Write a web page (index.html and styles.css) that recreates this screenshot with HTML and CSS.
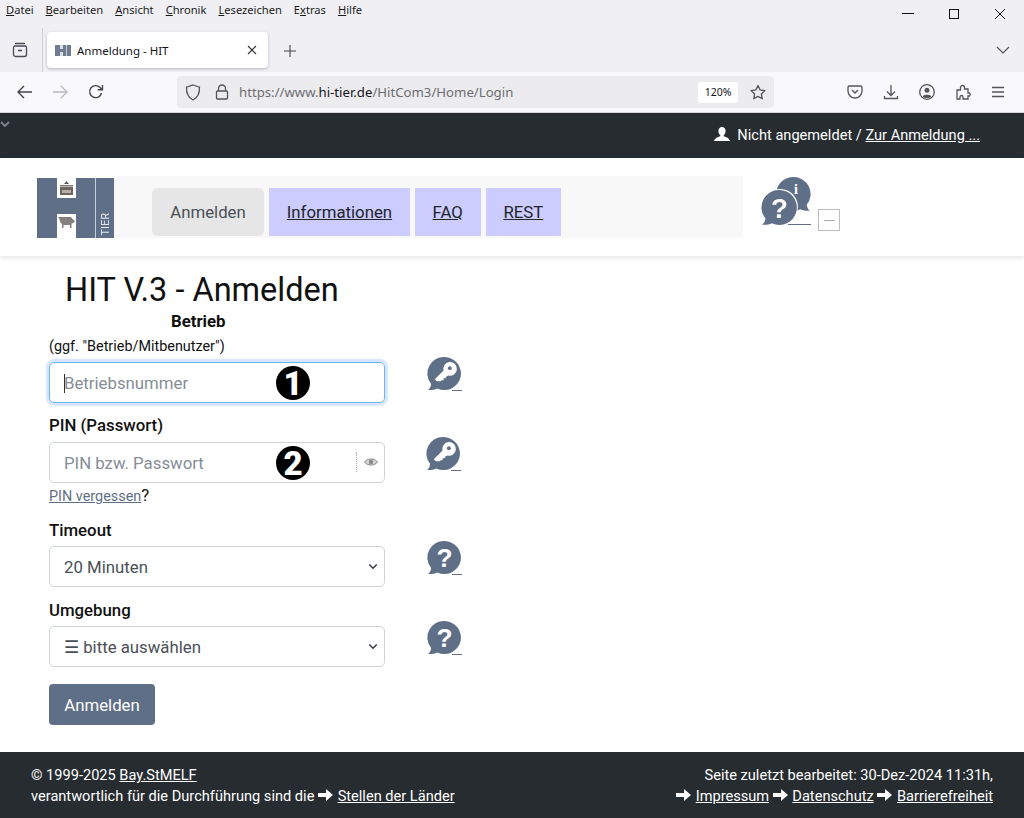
FILE: index.html
```html
<!DOCTYPE html>
<html lang="de">
<head>
<meta charset="utf-8">
<title>Anmeldung - HIT</title>
<link rel="stylesheet" href="styles.css">
</head>
<body>
<svg class="defs" width="0" height="0" aria-hidden="true">
  <defs>
    <symbol id="arrow" viewBox="0 0 16 14"><path d="M0 5h8V1l7 6-7 6V9H0z" fill="#fff"/></symbol>
    <symbol id="bubble-q" viewBox="0 0 36 36">
      <path d="M18 1a17 17 0 1 1-7.500 32.300C8 34.600 4.500 35 1 34.800c2-1.300 3-3.400 3.300-6A17 17 0 0 1 18 1z" fill="#5f6f87"/>
      <text x="18" y="28" class="bubble-mark">?</text>
    </symbol>
    <symbol id="bubble-i" viewBox="0 0 36 36">
      <path d="M18 1a17 17 0 1 0 7.500 32.300C28 34.600 31.500 35 35 34.800c-2-1.300-3-3.400-3.300-6A17 17 0 0 0 18 1z" fill="#5f6f87"/>
      <text x="21" y="18" class="bubble-info">i</text>
    </symbol>
    <symbol id="bubble-key" viewBox="0 0 36 36">
      <path d="M18 1a17 17 0 1 1-7.500 32.300C8 34.600 4.500 35 1 34.800c2-1.300 3-3.400 3.300-6A17 17 0 0 1 18 1z" fill="#5f6f87"/>
      <path d="M10 26l-2-2 9-9a7 7 0 1 1 5 5l-2 1-1 2h-2v2h-2l-1 1z" fill="#fff"/>
      <circle cx="23.500" cy="12.500" r="2" fill="#5f6f87"/>
    </symbol>
  </defs>
</svg>

<header class="browser">
  <div class="titlebar">
    <nav class="menu">
      <span><u>D</u>atei</span><span><u>B</u>earbeiten</span><span><u>A</u>nsicht</span><span><u>C</u>hronik</span><span><u>L</u>esezeichen</span><span>E<u>x</u>tras</span><span><u>H</u>ilfe</span>
    </nav>
    <div class="winbtns">
      <svg width="12" height="12" viewBox="0 0 12 12"><path d="M0 5.500h12" stroke="#111" fill="none"/></svg>
      <svg width="12" height="12" viewBox="0 0 12 12"><rect x="1.500" y="1.500" width="9" height="9" stroke="#111" fill="none"/></svg>
      <svg width="12" height="12" viewBox="0 0 12 12"><path d="M1 1l10 10M11 1L1 11" stroke="#111" fill="none"/></svg>
    </div>
  </div>
  <div class="tabbar">
    <svg class="tabs-icon" width="16" height="16" viewBox="0 0 16 16"><path d="M3 1.500h10M1.500 5.500a1.500 1.500 0 0 1 1.500-1.500h10a1.500 1.500 0 0 1 1.500 1.500v7a2 2 0 0 1-2 2h-9a2 2 0 0 1-2-2zM6 8.500h4" stroke="#4a4a55" stroke-width="1.300" fill="none"/></svg>
    <div class="tabsep"></div>
    <div class="tab">
      <svg class="favicon" width="16" height="11" viewBox="0 0 16 11"><path d="M0 0h16v11H0z" fill="#6f7c90"/><path d="M5 0h3v4H5zM5 7h3v4H5z" fill="#d9dde3"/><path d="M11 0h1v11h-1z" fill="#c4ccd6"/></svg>
      <span class="tabtitle">Anmeldung - HIT</span>
      <svg class="tabclose" width="10" height="10" viewBox="0 0 10 10"><path d="M1 1l8 8M9 1L1 9" stroke="#333" stroke-width="1.100" fill="none"/></svg>
    </div>
    <svg class="newtab" width="12" height="12" viewBox="0 0 12 12"><path d="M6 0v12M0 6h12" stroke="#444" stroke-width="1.100" fill="none"/></svg>
    <svg class="tablist" width="14" height="8" viewBox="0 0 14 8"><path d="M1 1l6 6 6-6" stroke="#555" stroke-width="1.200" fill="none"/></svg>
  </div>
  <div class="navbar">
    <svg class="ni first" width="16" height="14" viewBox="0 0 16 14"><path d="M15 7H1.500M7 1L1 7l6 6" stroke="#444" stroke-width="1.400" fill="none"/></svg>
    <svg class="ni" width="16" height="14" viewBox="0 0 16 14"><path d="M1 7h13.500M9 1l6 6-6 6" stroke="#b9b9bf" stroke-width="1.400" fill="none"/></svg>
    <svg class="ni reload" width="16" height="16" viewBox="0 0 16 16"><path d="M13.500 9a6 6 0 1 1-1.500-5.500L14 5.500M14.500 1v4.800H9.700" stroke="#444" stroke-width="1.400" fill="none"/></svg>
    <div class="urlbar">
      <svg width="16" height="17" viewBox="0 0 16 17"><path d="M8 1l6.500 2.200c.2 5.800-1.600 10.300-6.500 12.800-4.900-2.500-6.700-7-6.500-12.800z" stroke="#555" stroke-width="1.300" fill="none"/></svg>
      <svg class="lock" width="14" height="16" viewBox="0 0 14 16"><path d="M3.500 7V4.500a3.500 3.500 0 0 1 7 0V7M2.500 7h9a1 1 0 0 1 1 1v6a1 1 0 0 1-1 1h-9a1 1 0 0 1-1-1V8a1 1 0 0 1 1-1z" stroke="#555" stroke-width="1.300" fill="none"/></svg>
      <span class="url">https://www.<b>hi-tier.de</b>/HitCom3/Home/Login</span>
      <span class="zoom">120%</span>
      <svg class="star" width="16" height="16" viewBox="0 0 18 17"><path d="M9 1.200l2.400 5 5.400.7-4 3.800 1 5.400L9 13.500l-4.800 2.600 1-5.400-4-3.800 5.400-.7z" stroke="#555" stroke-width="1.500" fill="none" stroke-linejoin="round"/></svg>
    </div>
    <div class="tools">
      <svg width="16" height="16" viewBox="0 0 16 16"><path d="M2.500 2h11A1.500 1.500 0 0 1 15 3.500V7a7 7 0 0 1-14 0V3.500A1.500 1.500 0 0 1 2.500 2zM5 6l3 3 3-3" stroke="#555" stroke-width="1.300" fill="none"/></svg>
      <svg width="16" height="16" viewBox="0 0 16 16"><path d="M8 1v10M4 7.500L8 11.500l4-4M1.500 12v2.500h13V12" stroke="#555" stroke-width="1.300" fill="none"/></svg>
      <svg width="16" height="16" viewBox="0 0 16 16"><circle cx="8" cy="8" r="7.300" stroke="#555" stroke-width="1.300" fill="none"/><circle cx="8" cy="6.300" r="2.500" fill="#555"/><path d="M3.500 12.500c1-2.500 8-2.500 9 0-2 2-7 2-9 0z" fill="#555"/></svg>
      <svg width="16" height="16" viewBox="0 0 16 16"><path d="M2 6h3.500V3.500a2 2 0 0 1 4 0V5H13v4h1.500v0a2 2 0 0 1 0 3H13v3H8v-2a1.500 1.500 0 0 0-3 0v2H2z" stroke="#555" stroke-width="1.300" fill="none"/></svg>
      <svg width="14" height="12" viewBox="0 0 14 12"><path d="M1 1.500h12M1 6h12M1 10.500h12" stroke="#555" stroke-width="1.300" fill="none"/></svg>
    </div>
  </div>
</header>

<main class="page">
  <div class="topbar">
    <svg class="collapse" width="10" height="6" viewBox="0 0 10 6"><path d="M1 1l4 4 4-4" stroke="#7c8790" stroke-width="1.800" fill="none"/></svg>
    <svg class="user" width="16" height="15" viewBox="0 0 16 15"><path d="M8 0c2.300 0 3.600 1.800 3.600 4 0 1.700-.8 3.300-1.900 4.200v1.100c1.800.7 5.300 1.300 6.300 4.700H0c1-3.400 4.500-4 6.300-4.700V8.200C5.200 7.300 4.400 5.700 4.400 4 4.400 1.800 5.700 0 8 0z" fill="#fff"/></svg>
    <span>Nicht angemeldet / <a href="#">Zur Anmeldung ...</a></span>
  </div>

  <div class="sitehead">
    <div class="logo">
      <div class="logo-h">
        <span class="logo-top"><svg width="19" height="20" viewBox="0 0 19 20"><path d="M9.500 3l2.500 3H7z" fill="#5e5650"/><path d="M3 7h13v1.500H3z" fill="#7d746c"/><path d="M3 9h13v8H3z" fill="#6e655f"/><path d="M5 12h9v3H5z" fill="#b6b0a8"/></svg></span>
        <span class="logo-bottom"><svg width="19" height="24" viewBox="0 0 19 24"><path d="M1 3h13l1.500 2 2.500 2-1.500 2-2 .5v4.500h-1.500v-3L8 11 6.500 11v3H5v-4L3 8 2.500 5z" fill="#85807c"/></svg></span>
      </div>
      <div class="logo-side"><span>TIER</span></div>
    </div>
    <nav class="tabs">
      <span class="tab-active">Anmelden</span>
      <a class="tab-link" href="#">Informationen</a>
      <a class="tab-link" href="#">FAQ</a>
      <a class="tab-link" href="#">REST</a>
    </nav>
    <div class="help">
      <svg class="help-i" width="36" height="36"><use href="#bubble-i"/></svg>
      <span class="help-line"></span>
      <svg class="help-q" width="37" height="37"><use href="#bubble-q"/></svg>
    </div>
    <div class="tinybox"><span></span></div>
  </div>

  <section class="content">
    <h1>HIT V.3 - Anmelden</h1>
    <form class="form">
      <div class="betrieb">Betrieb</div>
      <div class="hint">(ggf. "Betrieb/Mitbenutzer")</div>
      <div class="row r1">
        <div class="field focus"><span class="caret"></span><span class="ph">Betriebsnummer</span><span class="num">1</span></div>
        <span class="hb"><svg width="35" height="35"><use href="#bubble-key"/></svg></span>
      </div>
      <label class="lab l2">PIN (Passwort)</label>
      <div class="row r2">
        <div class="field"><span class="ph">PIN bzw. Passwort</span><span class="num">2</span>
          <span class="eye"><svg width="14" height="10" viewBox="0 0 14 10"><path d="M0.500 5C3 1 11 1 13.500 5 11 9 3 9 0.500 5z" fill="#d5d5d5" stroke="#888"/><circle cx="7" cy="5" r="2.200" fill="#888"/></svg></span>
        </div>
        <span class="hb"><svg width="35" height="35"><use href="#bubble-key"/></svg></span>
      </div>
      <div class="forgot"><a href="#">PIN vergessen</a>?</div>
      <label class="lab l3">Timeout</label>
      <div class="row r3">
        <div class="field select"><span class="val">20 Minuten</span><svg class="chev" width="10" height="7" viewBox="0 0 12 8"><path d="M1.500 1.500L6 6l4.500-4.500" stroke="#343a40" stroke-width="1.800" fill="none"/></svg></div>
        <span class="hb"><svg width="35" height="35"><use href="#bubble-q"/></svg></span>
      </div>
      <label class="lab l4">Umgebung</label>
      <div class="row r4">
        <div class="field select"><span class="val">☰ bitte auswählen</span><svg class="chev" width="10" height="7" viewBox="0 0 12 8"><path d="M1.500 1.500L6 6l4.500-4.500" stroke="#343a40" stroke-width="1.800" fill="none"/></svg></div>
        <span class="hb"><svg width="35" height="35"><use href="#bubble-q"/></svg></span>
      </div>
      <button class="submit" type="button">Anmelden</button>
    </form>
  </section>

  <footer class="foot">
    <div class="foot-l">
      <div>© 1999-2025 <a href="#">Bay.StMELF</a></div>
      <div>verantwortlich für die Durchführung sind die <svg class="arr" width="16" height="14"><use href="#arrow"/></svg> <a href="#">Stellen der Länder</a></div>
    </div>
    <div class="foot-r">
      <div>Seite zuletzt bearbeitet: 30-Dez-2024 11:31h,</div>
      <div><svg class="arr" width="16" height="14"><use href="#arrow"/></svg> <a href="#">Impressum</a> <svg class="arr" width="16" height="14"><use href="#arrow"/></svg> <a href="#">Datenschutz</a> <svg class="arr" width="16" height="14"><use href="#arrow"/></svg> <a href="#">Barrierefreiheit</a></div>
    </div>
  </footer>
</main>
</body>
</html>
```
FILE: styles.css
```css
* { box-sizing: border-box; }
html, body { margin: 0; padding: 0; }
body { width: 1024px; height: 818px; overflow: hidden; font-family: Roboto, sans-serif; font-size: 16.800px; color: #212529; background: #fff; display: flex; flex-direction: column; }
.defs { position: absolute; }
.bubble-mark { font: 900 27px "Liberation Sans", sans-serif; fill: #fff; text-anchor: middle; }
.bubble-info { font: 700 14px "Liberation Serif", serif; fill: #fff; text-anchor: middle; }

.browser { height: 113px; flex: none; font-family: "Noto Sans", sans-serif; background: #f0f0f4; border-bottom: 1px solid #d6d6da; display: flex; flex-direction: column; }
.titlebar { height: 28px; display: flex; justify-content: space-between; }
.menu { display: flex; gap: 12px; padding: 1px 0 0 6px; font-size: 11.150px; color: #1a1a1a; line-height: 18px; }
.winbtns { display: flex; gap: 34px; padding: 8px 18px 0 0; }
.tabbar { height: 44px; display: flex; align-items: center; position: relative; padding-left: 12px; }
.tabsep { width: 1px; height: 44px; background: #cfcfd4; margin-left: 14px; }
.tab { width: 221px; height: 36px; margin: 0 0 0 4px; background: #fff; border-radius: 4px; box-shadow: 0 1px 3px rgba(0,0,0,.25); display: flex; align-items: center; padding: 0 11px 0 8px; font-size: 11.500px; color: #15141a; }
.favicon { margin-right: 6px; }
.tabtitle { flex: 1; }
.newtab { margin: 1px 0 0 16px; }
.tablist { position: absolute; right: 14px; top: 18px; }
.navbar { height: 40px; background: #f9f9fb; display: flex; align-items: center; }
.ni { margin-left: 19px; }
.ni.first { margin-left: 17px; }
.ni.reload { margin-left: 20px; }
.urlbar { width: 597px; height: 32px; margin-left: 73px; background: #ececee; border-radius: 4px; display: flex; align-items: center; padding: 0 8px; }
.lock { margin-left: 14px; }
.url { margin-left: 10px; font-size: 13.200px; color: #6c6c74; flex: 1; }
.url b { font-weight: 400; color: #15141a; }
.zoom { width: 40px; height: 21px; background: #fff; border-radius: 3px; font-size: 10.500px; text-align: center; line-height: 21px; color: #15141a; }
.star { margin-left: 12px; }
.tools { display: flex; align-items: center; gap: 20px; margin-left: 73px; }

.page { flex: 1; display: flex; flex-direction: column; min-height: 0; }
.topbar { height: 45px; flex: none; background: #262c30; color: #fff; font-size: 14.600px; display: flex; align-items: center; justify-content: flex-end; gap: 7px; padding: 0 44px 2px 0; position: relative; }
.topbar a { color: #fff; }
.collapse { position: absolute; left: 0; top: 8px; }
.user { margin-top: -1px; }

.sitehead { height: 98px; flex: none; display: flex; align-items: flex-start; padding: 18px 0 0 37px; box-shadow: 0 2px 5px rgba(0,0,0,.1); position: relative; }
.logo { width: 77px; height: 60px; margin-top: 2px; display: flex; background: #5f6f87; }
.logo-h { width: 58px; display: flex; flex-direction: column; justify-content: space-between; align-items: center; }
.logo-top { width: 19px; height: 20px; background: #fff; display: block; }
.logo-top svg { display: block; }
.logo-bottom { width: 19px; height: 24px; background: #fff; display: block; }
.logo-bottom svg { display: block; }
.logo-side { flex: 1; border-left: 1px solid #c4ccd6; display: flex; align-items: flex-end; justify-content: center; padding-bottom: 2px; }
.logo-side span { color: #e6e9ee; font-size: 11px; writing-mode: vertical-rl; transform: rotate(180deg); }
.tabs { width: 629px; height: 62px; background: #f8f8f8; display: flex; align-items: flex-end; gap: 5px; padding: 0 0 2px 38px; }
.tab-active { width: 112px; height: 48px; line-height: 48px; text-align: center; background: #e6e6e6; border-radius: 6px; color: #495057; }
.tab-link { height: 48px; line-height: 48px; padding: 0 17.750px; background: #ccf; color: #212529; }
.help { width: 62px; height: 62px; margin-left: 17px; position: relative; }
.help-i { position: absolute; left: 15px; top: 0; }
.help-q { position: absolute; left: 1px; top: 13px; filter: drop-shadow(1px -1px 0 #fff); }
.help-line { position: absolute; left: 28px; top: 48px; width: 23px; height: 1px; background: #5f6f87; }
.tinybox { width: 22px; height: 22px; margin: 33px 0 0 -4px; border: 1px solid #bdbdbd; display: flex; align-items: center; justify-content: center; }
.tinybox span { width: 11px; height: 1px; background: #aaa; }

.content { flex: 1; min-height: 0; }
h1 { margin: 15px 0 0 65px; font-size: 32.500px; font-weight: 400; line-height: 38px; color: #111; }
.form { padding-left: 49px; }
.betrieb { margin: 2px 0 0 122px; font-weight: 700; line-height: 20px; color: #111; }
.hint { font-size: 14.400px; line-height: 16px; margin-top: 8px; color: #111; }
.row { display: flex; align-items: flex-start; }
.r1, .r2 { margin-top: 7px; }
.r3, .r4 { margin-top: 6px; }
.field { width: 336px; height: 41px; border: 1px solid #ced4da; border-radius: 5px; display: flex; align-items: center; padding-left: 14px; position: relative; color: #495057; }
.field.focus { border-color: #6db5f0; box-shadow: 0 0 0 3px rgba(13,110,253,.13), 0 0 6px rgba(13,110,253,.12); }
.caret { position: absolute; left: 14px; top: 11px; width: 1px; height: 19px; background: #333; }
.ph { color: #868e96; }
.num { position: absolute; left: 226px; top: 3px; width: 34px; height: 34px; border-radius: 50%; background: #000; color: #fff; font: 900 33px/35px Roboto, sans-serif; text-align: center; }
.eye { position: absolute; right: 0; top: 9px; height: 20px; width: 28px; border-left: 1px dotted #aaa; display: flex; align-items: center; justify-content: center; }
.select .val { flex: 1; }
.chev { margin-right: 6px; }
.hb { margin: -6px 0 0 42px; position: relative; width: 35px; height: 35px; display: block; }
.hb::after { content: ""; position: absolute; right: 0; bottom: 0; width: 10px; height: 1px; background: #5f6f87; }
.hb svg { display: block; }
.r2 .hb { margin-left: 41px; }
.lab { display: block; font-weight: 500; line-height: 20px; color: #111; }
.l2 { margin-top: 12px; }
.forgot { line-height: 20px; margin-top: 2px; color: #111; }
.forgot a { color: #5f6f87; font-size: 14.400px; }
.l3 { margin-top: 13px; }
.l4 { margin-top: 13px; }
.submit { display: block; margin-top: 17px; width: 106px; height: 41px; border: 0; border-radius: 4px; background: #5f6f87; color: #fff; font: 400 16.800px Roboto, sans-serif; }

.foot { height: 66px; flex: none; background: #262c30; color: #fff; font-size: 14.600px; line-height: 21px; display: flex; justify-content: space-between; padding: 13px 31px 0; }
.foot a { color: #fff; }
.foot-r { text-align: right; }
.arr { vertical-align: -1px; }
```
